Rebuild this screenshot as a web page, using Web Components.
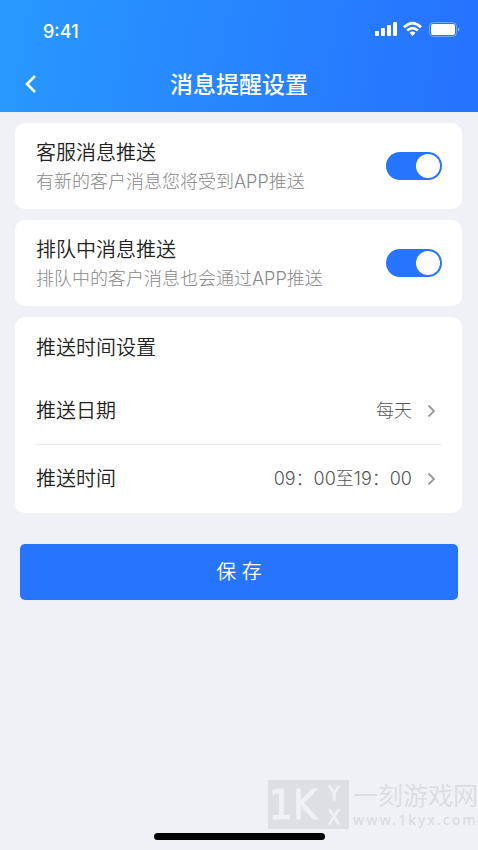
<!DOCTYPE html>
<html lang="zh-CN">
<head>
<meta charset="utf-8">
<meta name="viewport" content="width=device-width, initial-scale=1">
<title>消息提醒设置</title>
<style>
html, body { margin: 0; }
body {
  background: #f0f1f6;
  color: #222;
  font-family: "Inter", "Noto Sans CJK SC", sans-serif;
}
</style>
</head>
<body>
<settings-page></settings-page>
<script>
const define = (name, html) => {
  const template = document.createElement('template');
  template.innerHTML = '<style>*{box-sizing:border-box}</style>' + html;
  customElements.define(name, class extends HTMLElement {
    constructor() {
      super();
      this.attachShadow({ mode: 'open' }).append(template.content.cloneNode(true));
    }
  });
};

define('status-bar', `
<style>
:host { display: flex; justify-content: space-between; align-items: flex-start; height: 56px; padding: 20px 18px 0 43px; }
time { font: 500 18px/24px "Inter", sans-serif; }
svg { display: block; }
</style>
<time>9:41</time>
<svg width="86" height="20" viewBox="0 0 86 20" fill="#fff" aria-hidden="true">
  <rect x="1" y="11" width="4" height="5" rx="1"/><rect x="7" y="8" width="4" height="8" rx="1"/>
  <rect x="13" y="5" width="4" height="11" rx="1"/><rect x="19" y="2" width="4" height="14" rx="1"/>
  <g fill="none" stroke="#fff" stroke-width="2.7"><path d="M30 7.2Q38.5-1 47 7.2"/><path d="M33.2 10.6Q38.5 5.6 43.8 10.6"/></g>
  <path d="M35.5 12.8Q38.5 10.2 41.5 12.8L38.5 16Z"/>
  <rect x="55.5" y="2.5" width="27" height="14" rx="4" fill="none" stroke="#fff" stroke-opacity=".35"/>
  <rect x="57" y="4" width="24" height="11" rx="2"/>
  <path d="M84 7.5Q87 9.5 84 11.5Z" opacity=".5"/>
</svg>`);

define('nav-bar', `
<style>
:host { display: grid; grid-template-columns: 60px 1fr 60px; align-items: center; height: 56px; }
button { display: flex; align-items: center; height: 56px; padding: 0 0 0 24px; border: 0; background: none; color: inherit; }
h1 { margin: 0; padding: 2px 0 0; text-align: center; font-size: 23px; line-height: 32px; font-weight: 500; }
</style>
<button type="button" aria-label="返回"><svg width="14" height="20" viewBox="0 0 14 20" fill="none" stroke="currentColor" stroke-width="2.6"><path d="M11 2L3 10L11 18"/></svg></button>
<h1><slot></slot></h1>`);

define('settings-card', `
<style>
:host { display: block; padding: 0 20px 0 21px; border-radius: 10px; background: #fff; }
</style>
<slot></slot>`);

define('switch-row', `
<style>
:host { display: flex; align-items: center; justify-content: space-between; height: 86px; }
label { flex: 1; padding-top: 2px; }
b { display: block; font-size: 20px; line-height: 30px; font-weight: 350; }
small { display: block; font-size: 18px; line-height: 28px; font-weight: 300; color: #888; }
input { appearance: none; width: 56px; height: 28px; margin: 0; padding: 2px; border-radius: 14px; background: #c8ccd4; display: flex; }
input::before { content: ""; width: 24px; height: 24px; border-radius: 50%; background: #fff; }
input:checked { background: #2674ff; justify-content: flex-end; }
</style>
<label for="toggle"><b><slot></slot></b><small><slot name="note"></slot></small></label>
<input id="toggle" type="checkbox" role="switch" checked>`);

define('choice-row', `
<style>
:host { display: block; height: 68px; }
:host([divided]) { border-bottom: 1px solid #eeeef0; }
button { display: flex; align-items: center; width: 100%; height: 100%; padding: 0 6px 0 0; border: 0; background: none; font: inherit; text-align: left; color: #222; }
.name { flex: 1; font-size: 20px; line-height: 30px; font-weight: 350; }
.value { font-size: 18px; line-height: 28px; font-weight: 300; color: #555; }
svg { margin-left: 15px; }
</style>
<button type="button"><span class="name"><slot></slot></span><span class="value"><slot name="value"></slot></span>
<svg width="9" height="14" viewBox="0 0 9 14" fill="none" stroke="#999" stroke-width="1.8"><path d="M1.5 1.5L7 7L1.5 12.5"/></svg></button>`);

define('save-button', `
<style>
:host { display: block; }
button { display: block; width: 100%; height: 56px; border: 0; border-radius: 5px; background: #2674ff; color: #fff; font-family: inherit; font-size: 20px; line-height: 30px; font-weight: 350; }
</style>
<button type="button"><slot></slot></button>`);

define('site-mark', `
<style>
:host { display: flex; align-items: center; gap: 4px; color: #dbdce0; }
svg { display: block; flex: none; }
p { margin: 0; white-space: nowrap; }
.name { font-size: 25px; line-height: 30px; font-weight: 350; }
.site { font: 500 14px/18px "Noto Sans", sans-serif; letter-spacing: 2px; }
</style>
<svg width="81" height="49" viewBox="0 0 81 49" role="img" aria-label="1KYX">
  <rect width="81" height="49" fill="#dedfe2"/>
  <g fill="#f0f1f6" stroke="#f0f1f6" font-family="DejaVu Sans Condensed, DejaVu Sans, sans-serif">
    <text x="1" y="39" font-size="41">1</text><text x="25" y="39" font-size="41">K</text>
    <text x="66" y="20" font-size="20" text-anchor="middle">Y</text><text x="66" y="44" font-size="20" text-anchor="middle">X</text>
  </g>
</svg>
<div><p class="name">一刻游戏网</p><p class="site">www.1kyx.com</p></div>`);

define('settings-page', `
<style>
:host { display: flex; flex-direction: column; min-height: 100vh; }
header { background: linear-gradient(100deg, #2899ff, #2673ff 95%); color: #fff; }
main { display: flex; flex-direction: column; gap: 11px; padding: 11px 16px 0 15px; }
h2 { margin: 0; padding: 16px 0 14px; font-size: 20px; line-height: 30px; font-weight: 350; }
save-button { margin: 20px 4px 0 5px; }
footer { margin-top: auto; overflow: hidden; }
site-mark { margin-left: 268px; }
.home { width: 171px; height: 7px; margin: 4px auto 10px; border-radius: 4px; background: #000; }
</style>
<header><status-bar></status-bar><nav-bar>消息提醒设置</nav-bar></header>
<main>
  <settings-card><switch-row>客服消息推送<span slot="note">有新的客户消息您将受到APP推送</span></switch-row></settings-card>
  <settings-card><switch-row>排队中消息推送<span slot="note">排队中的客户消息也会通过APP推送</span></switch-row></settings-card>
  <settings-card>
    <h2>推送时间设置</h2>
    <choice-row divided>推送日期<span slot="value">每天</span></choice-row>
    <choice-row>推送时间<span slot="value">09：00至19：00</span></choice-row>
  </settings-card>
  <save-button>保 存</save-button>
</main>
<footer><site-mark></site-mark><div class="home"></div></footer>`);
</script>
</body>
</html>
